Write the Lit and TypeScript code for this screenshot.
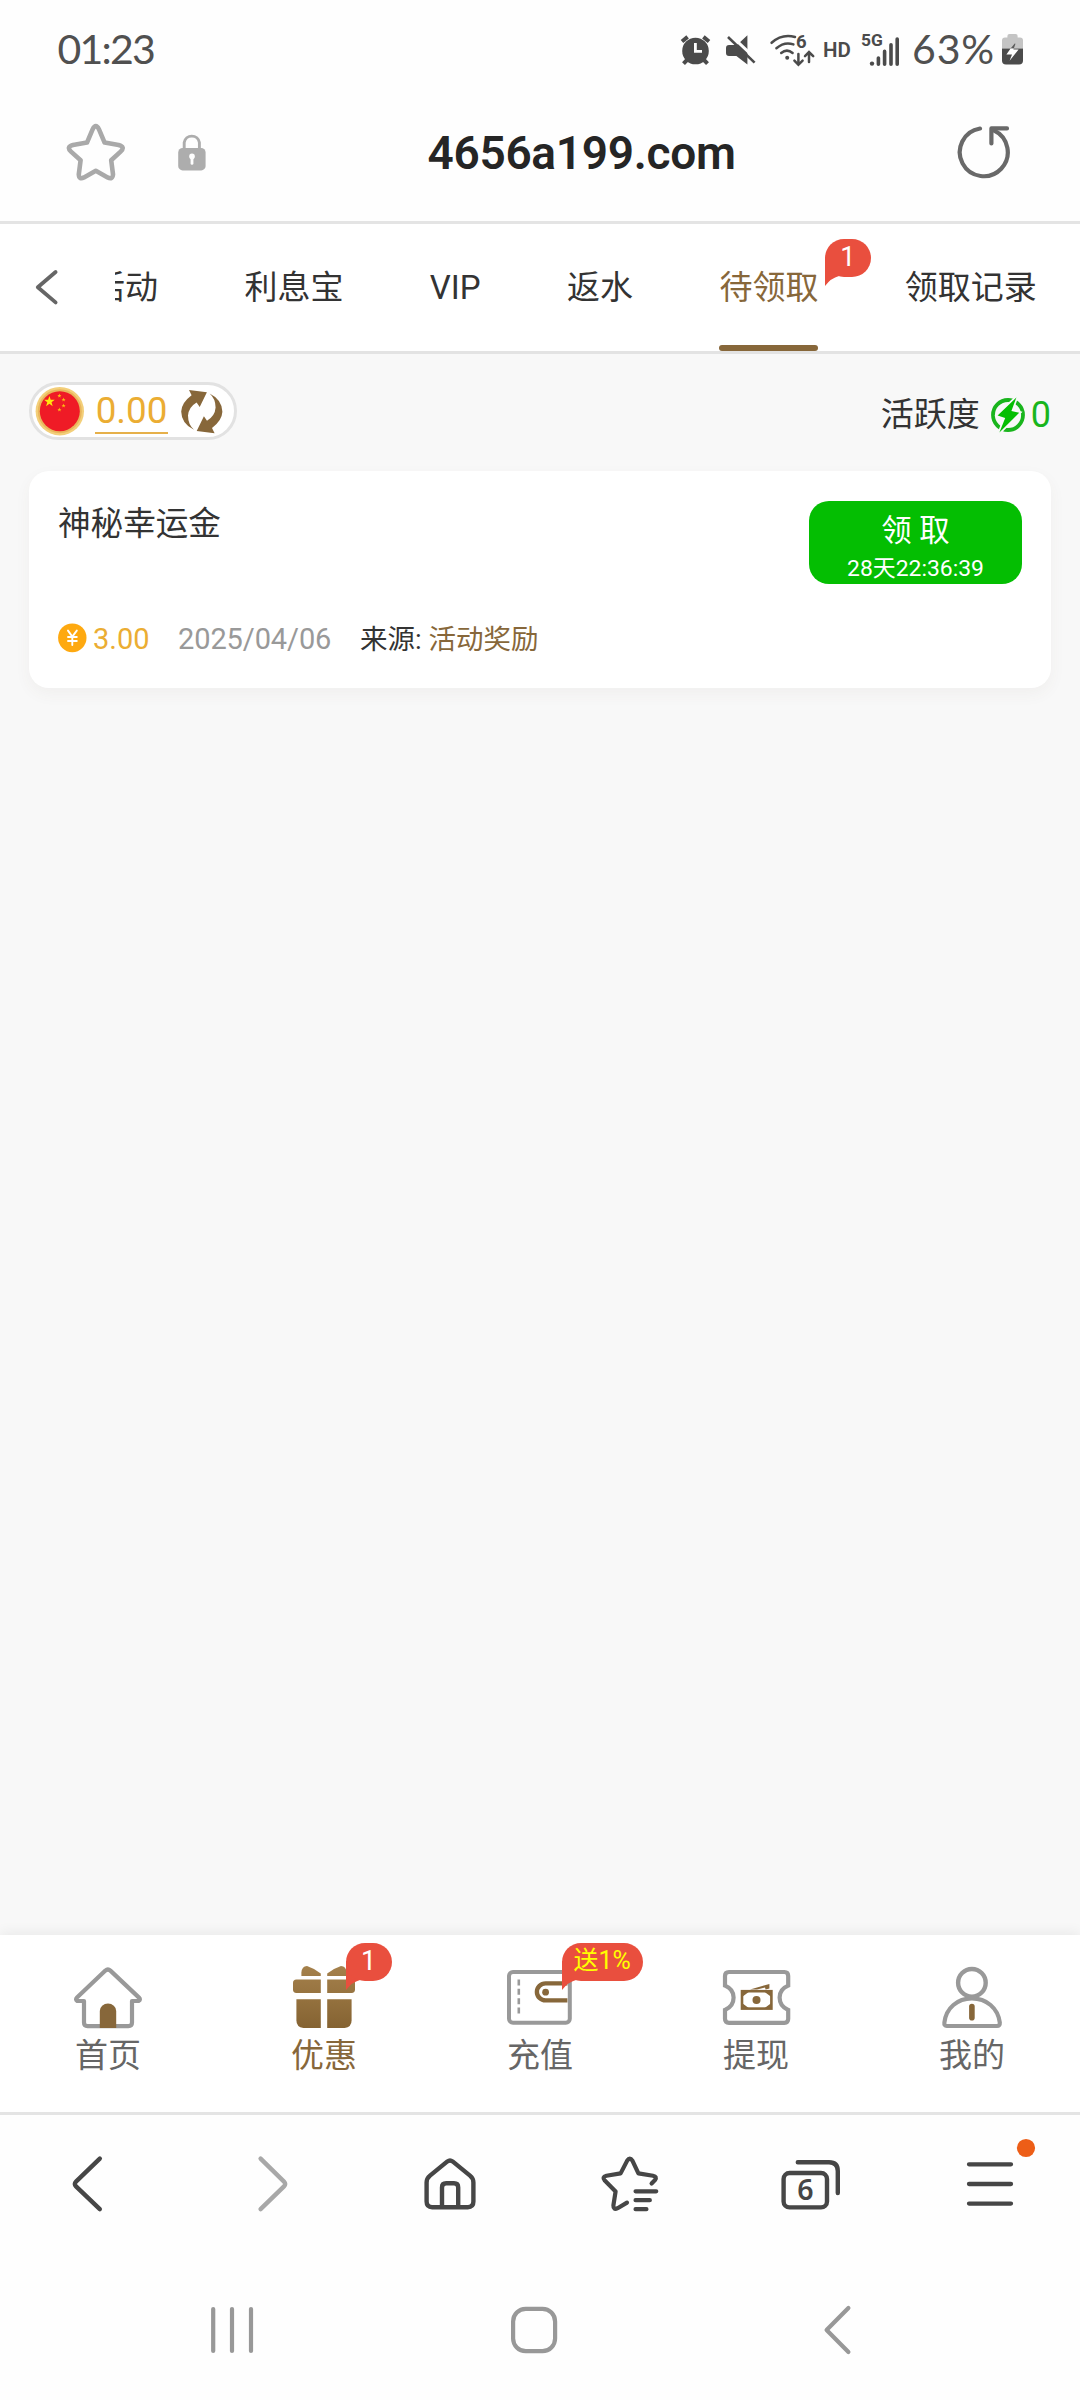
import { LitElement, html, css, svg } from "lit";
import { customElement, property } from "lit/decorators.js";
import { classMap } from "lit/directives/class-map.js";

interface NavItem {
  label: string;
  icon: unknown;
  active?: boolean;
  badge?: string;
  promo?: boolean;
}

/* Icons are drawn in screen units, each viewBox names the area that it covers. */
const icon = (x: number, y: number, w: number, h: number, body: unknown) => html`
  <svg width=${w} height=${h} viewBox="${x} ${y} ${w} ${h}" fill="none" style="display:block;flex:none">${body}</svg>
`;

const alarmIcon = icon(680, 34, 31, 32, svg`
  <g stroke="#4b4b4b" stroke-width="4" stroke-linecap="butt">
    <path d="M682 41.5L687.6 36.9M703.4 36.9L709 41.5"/>
    <path d="M687 60L683.5 63.6M704 60L707.5 63.6" />
  </g>
  <circle cx="695.5" cy="51" r="13.3" fill="#4b4b4b"/>
  <path d="M695.4 43V51.4H702" stroke="#fefefe" stroke-width="2.8"/>`);

const muteIcon = icon(725, 34, 32, 32, svg`
  <path d="M729 45H737L747.4 35.2V64.4L736.4 56H729Q726 56 726 53V48Q726 45 729 45Z" fill="#4b4b4b"/>
  <path d="M729 33.6L758 61" stroke="#fefefe" stroke-width="3"/>
  <path d="M728 37L754.6 62.6" stroke="#4b4b4b" stroke-width="2.6"/>`);

const wifiIcon = icon(769, 32, 46, 35, svg`
  <g stroke="#4b4b4b" stroke-width="2.5" stroke-linecap="round">
    <path d="M771.6 42.8Q782 33.4 795 37"/>
    <path d="M776.4 48.2Q784.6 41.2 793.4 44.4"/>
    <path d="M781.2 53Q787 48.2 792.6 53"/>
    <path d="M798.4 54V64.4M794.4 60.6L798.4 64.8L802.6 60.6"/>
    <path d="M809 62V52.4M805 56.2L809 52L813.2 56.2"/>
  </g>
  <circle cx="787.2" cy="57.8" r="2" fill="#4b4b4b"/>
  <text x="796" y="47.8" font-size="18.5" font-weight="700" font-family="Roboto, sans-serif" fill="#4b4b4b">6</text>`);

const signalIcon = icon(861, 26, 41, 47, svg`
  <text x="862" y="46.4" font-size="17.4" font-weight="700" font-family="Roboto, sans-serif" fill="#4b4b4b">5G</text>
  <circle cx="873" cy="63.6" r="2.2" fill="#4b4b4b"/>
  <path d="M879.4 58V64.2M885.6 51.4V64.2M892 44.8V64.2M898.2 39V64.2" stroke="#4b4b4b" stroke-width="3.6" stroke-linecap="round"/>`);

const batteryIcon = icon(1001, 33, 23, 33, svg`
  <path d="M1002 48.6V40.5Q1002 37.5 1005 37.5H1007.4V36Q1007.4 34 1009.4 34H1015.6Q1017.6 34 1017.6 36V37.5H1020Q1023 37.5 1023 40.5V48.6Z" fill="#c4c4c4"/>
  <path d="M1002 48.6H1023V60.5Q1023 64.6 1019 64.6H1006Q1002 64.6 1002 60.5Z" fill="#4b4b4b"/>
  <path d="M1015 43.2L1010.6 48.6H1013.8L1015.4 44Z" fill="#5a5a5a"/>
  <path d="M1010.6 48.6L1006.4 54.6H1012L1009.6 60.8L1018.6 49.6H1013.4L1013.8 48.6Z" fill="#fff"/>`);

const starIcon = icon(66, 122, 60, 60, svg`
  <path d="M92.6 129.4Q95.8 122.8 99 129.4L104.6 142.6L118.6 145Q125.6 147 120.6 151.6L111.2 160.2L113 174.4Q112.6 180 107.6 177.4L95.8 170.8L84 177.4Q79 180 78.8 174.4L80.6 160.2L71 151.6Q66 147 73 145L87 142.6Z" stroke="#a9a9a9" stroke-width="4.6" stroke-linejoin="round"/>`);

const lockIcon = icon(177, 132, 30, 40, svg`
  <path d="M184.2 150V142.6A7.7 7.7 0 0 1 199.4 142.6V150" stroke="#adadad" stroke-width="2.9"/>
  <rect x="178.2" y="148" width="27.4" height="22.4" rx="4.4" fill="#adadad"/>
  <circle cx="192" cy="156.4" r="2.8" fill="#fefefe"/>
  <path d="M192 157V163.4" stroke="#fefefe" stroke-width="2.8" stroke-linecap="round"/>`);

const reloadIcon = icon(956, 124, 56, 56, svg`
  <path d="M980 128.5A24 24 0 1 0 993.8 130.4" stroke="#696969" stroke-width="4.2" stroke-linecap="round"/>
  <path d="M1007 128.4H991.4V143.4" stroke="#696969" stroke-width="4.2" stroke-linecap="round" stroke-linejoin="round"/>`);

const chevronIcon = icon(34, 268, 26, 39, svg`
  <path d="M55.6 272L37.8 287.2L55.6 302.4" stroke="#666" stroke-width="3.8" stroke-linecap="round" stroke-linejoin="round"/>`);

const tinyStar = (x: number, y: number, r: number) => {
  const pts = Array.from({ length: 10 }, (_, i) => {
    const a = -Math.PI / 2 + (i * Math.PI) / 5;
    const d = i % 2 ? r * 0.4 : r;
    return `${(x + d * Math.cos(a)).toFixed(2)},${(y + d * Math.sin(a)).toFixed(2)}`;
  }).join(" ");
  return svg`<polygon points=${pts} fill="#ffe70d"/>`;
};

const flagIcon = icon(35, 386, 50, 50, svg`
  <circle cx="59.8" cy="411.2" r="24.2" fill="#f3cf7a"/>
  <circle cx="59.8" cy="411.2" r="22" fill="#e9b65c"/>
  <circle cx="59.8" cy="411.2" r="20" fill="#ef1b26"/>
  ${tinyStar(49.4, 401.6, 5.6)}
  <g opacity=".8">${tinyStar(59.4, 395.8, 2.2)}${tinyStar(63.6, 399.6, 2.2)}${tinyStar(63.6, 405.6, 2.2)}${tinyStar(59.4, 409.6, 2.2)}</g>`);

const swapHalf = "M189 390L206.9 392.2L199.7 407L196.6 402.4Q188.6 407 188 415.6Q188 424.6 194 429.8Q181.4 423.6 181.2 411.4Q181.6 402.6 191.6 395.2Z";
const swapIcon = icon(180, 388, 44, 47, svg`
  <path d=${swapHalf} fill="#87673a"/>
  <path d=${swapHalf} fill="#87673a" transform="rotate(180 201.8 411.6)"/>`);

const energyIcon = icon(990, 397, 37, 37, svg`
  <circle cx="1008" cy="415" r="15" stroke="#19b51d" stroke-width="3.8"/>
  <path d="M1016.4 397.4L997.6 415.4L1005.2 418L999.4 432.6L1019.2 412.8L1011.4 411Z" fill="#04be02" stroke="#f8f8f8" stroke-width="3.4"/>
  <path d="M1016.4 397.4L997.6 415.4L1005.2 418L999.4 432.6L1019.2 412.8L1011.4 411Z" fill="#04be02"/>`);

const coinIcon = icon(58, 623, 29, 30, svg`
  <ellipse cx="72.3" cy="637.8" rx="14.2" ry="14.4" fill="#fea910"/>
  <path d="M68 630.6L72.3 636.6L76.8 630.6M72.3 636.6V645M68 637H76.8M68 641H76.8" stroke="#fff" stroke-width="1.9" stroke-linecap="round"/>`);

const homeIcon = icon(73, 1965, 70, 64, svg`
  <path d="M84 2001H77.2Q75 1999.6 77 1997.6L105.4 1970.6Q107.9 1968.4 110.4 1970.6L139 1997.6Q141 1999.6 138.6 2001H132V2022.6Q132 2026.2 128.4 2026.2H87.6Q84 2026.2 84 2022.6Z" stroke="#999" stroke-width="4.2" stroke-linejoin="round"/>
  <path d="M99.8 2028V2011A8.2 7.4 0 0 1 116.2 2011V2028Z" fill="#87673a"/>`);

const giftIcon = icon(292, 1965, 64, 64, svg`
  <defs><linearGradient id="g" x1="0" y1="1966" x2="0" y2="2028" gradientUnits="userSpaceOnUse">
    <stop offset="0" stop-color="#a5814c"/><stop offset="1" stop-color="#856332"/></linearGradient></defs>
  <g fill="url(#g)">
    <path d="M301.4 1976V1972.6Q301.8 1966 307 1966Q315 1968.6 320.8 1973.6V1976Z"/>
    <path d="M346.6 1976V1972.6Q346.2 1966 341 1966Q333 1968.6 327.2 1973.6V1976Z"/>
    <path d="M320.8 1979.4V1993H296.4Q293 1993 293 1989.6V1983Q293 1979.4 296.4 1979.4Z"/>
    <path d="M327.2 1979.4V1993H351.6Q355 1993 355 1989.6V1983Q355 1979.4 351.6 1979.4Z"/>
    <path d="M320.8 1999.2V2028H303.4Q296.4 2027 296.4 2020.4V1999.2Z"/>
    <path d="M327.2 1999.2V2028H344.6Q351.6 2027 351.6 2020.4V1999.2Z"/>
  </g>`);

const walletIcon = icon(506, 1965, 68, 64, svg`
  <rect x="509" y="1972" width="60.8" height="50.8" rx="4" stroke="#999" stroke-width="4"/>
  <path d="M518.8 1979.4V2014.6" stroke="#999" stroke-width="2.6" stroke-dasharray="6 3.4"/>
  <path d="M567.4 1983.4H545.6A8.6 8.4 0 0 0 545.6 2000.4H567.4" stroke="#87673a" stroke-width="4.4"/>
  <circle cx="545.6" cy="1992.2" r="3.4" fill="#87673a"/>`);

const ticketIcon = icon(722, 1965, 69, 64, svg`
  <path d="M729 1972H784.4Q788.2 1972 788.2 1976V1985.6Q779.6 1989 779.6 1997.6Q779.6 2006.4 788.2 2010V2018.8Q788.2 2022.8 784.4 2022.8H729Q725 2022.8 725 2018.8V2010Q733.6 2006.4 733.6 1997.6Q733.6 1989 725 1985.6V1976Q725 1972 729 1972Z" stroke="#999" stroke-width="4.2"/>
  <rect x="742" y="1991.2" width="29.4" height="17.4" stroke="#87673a" stroke-width="2.6"/>
  <path d="M743 1995V1992.4H746.4ZM770.4 1995V1992.4H767ZM743 2005V2007.6H746.4ZM770.4 2005V2007.6H767Z" stroke="#87673a" stroke-width="2"/>
  <circle cx="756.5" cy="1999.9" r="4" fill="#87673a"/>
  <path d="M750 1989.4L769.4 1984V1988.6L765.6 1989.4L765 1987.4L757 1989.4Z" fill="#87673a"/>`);

const personIcon = icon(941, 1965, 63, 64, svg`
  <ellipse cx="971.9" cy="1982.8" rx="13.8" ry="13.8" stroke="#999" stroke-width="4.4"/>
  <path d="M946.8 2026Q944 2026 944.4 2022.6C946 2008 957.6 1998.4 971.9 1998.4C986.2 1998.4 998 2008 999.8 2022.6Q1000 2026 997 2026Z" stroke="#999" stroke-width="4.2"/>
  <path d="M971.9 2006.6V2017.8" stroke="#87673a" stroke-width="5.6" stroke-linecap="round"/>`);

const browserIcons = [
  icon(60, 2150, 60, 68, svg`<path d="M99.8 2158.6L76 2181.6Q73.6 2184 76 2186.4L99.8 2209.2" stroke="#464646" stroke-width="4.4" stroke-linecap="round"/>`),
  icon(240, 2150, 60, 68, svg`<path d="M260.6 2158.6L284 2181.6Q286.4 2184 284 2186.4L260.6 2209.2" stroke="#a8a8a8" stroke-width="4.4" stroke-linecap="round"/>`),
  icon(420, 2150, 60, 68, svg`
    <g stroke="#464646" stroke-width="4.4" stroke-linejoin="round">
      <path d="M447.4 2161.4Q450 2159.4 452.6 2161.4L470 2175.6Q473.4 2178.4 473.4 2182.4V2201.6Q473.4 2207.2 467.8 2207.2H432.2Q426.6 2207.2 426.6 2201.6V2182.4Q426.6 2178.4 430 2175.6Z"/>
      <path d="M442 2207V2187.4Q442 2183.2 446.2 2183.2H454Q458.2 2183.2 458.2 2187.4V2207"/>
    </g>`),
  icon(600, 2150, 60, 68, svg`
    <path d="M651.6 2183.4L655 2180Q657.4 2176.6 653 2175.8L638.4 2173.4L632.4 2160.6Q629.8 2156.4 627.2 2160.6L620.6 2173.4L606.4 2175.8Q601.6 2177 604.8 2180.6L615.6 2191.4L613.4 2205.4Q613.2 2210.4 617.6 2208.2L627 2202.6" stroke="#464646" stroke-width="4.2" stroke-linecap="round" stroke-linejoin="round"/>
    <path d="M635.6 2191.3H656.2M635.6 2200.2H649.8M635.6 2209.2H646.4" stroke="#464646" stroke-width="4.3" stroke-linecap="round"/>`),
  icon(779, 2150, 62, 68, svg`
    <rect x="783.6" y="2173" width="43.4" height="34.4" rx="6" stroke="#464646" stroke-width="4.4"/>
    <path d="M797.8 2162.2H829Q837.8 2162.2 837.8 2171V2193" stroke="#464646" stroke-width="4.4" stroke-linecap="round"/>
    <text x="805.5" y="2199.6" text-anchor="middle" font-size="28.5" font-weight="600" font-family="'Noto Sans', sans-serif" fill="#464646">6</text>`),
  icon(960, 2137, 78, 94, svg`
    <path d="M969 2164.3H1011M969 2184H1011M969 2203.6H1011" stroke="#464646" stroke-width="4.3" stroke-linecap="round"/>
    <circle cx="1026" cy="2148" r="9.1" fill="#ed5e17"/>`),
];

const recentsIcon = icon(210, 2304, 46, 52, svg`<path d="M213.2 2309V2351M232 2309V2351M251 2309V2351" stroke="#989898" stroke-width="4.2" stroke-linecap="round"/>`);
const sysHomeIcon = icon(509, 2304, 50, 52, svg`<rect x="513.1" y="2308.8" width="42" height="42.4" rx="12.6" stroke="#989898" stroke-width="4.2"/>`);
const sysBackIcon = icon(822, 2304, 31, 52, svg`<path d="M848.4 2308L826.6 2330L848.4 2352" stroke="#989898" stroke-width="4.2" stroke-linecap="round" stroke-linejoin="round"/>`);

@customElement("bubble-badge")
export class BubbleBadge extends LitElement {
  @property() text = "";
  @property({ type: Boolean }) promo = false;

  static styles = css`
    :host { display: block; position: relative; }
    .bubble {
      box-sizing: border-box; min-width: 46px; height: 38px; line-height: 36px; padding: 0 12px;
      border-radius: 19px; background: #e94f3e; color: #fff; font-size: 27px; text-align: center; white-space: nowrap;
      position: relative;
    }
    .tail { position: absolute; left: 0; top: 18px; display: block; }
    .promo { color: #ffff00; font-size: 24.9px; }
  `;

  render() {
    return html`
      <svg class="tail" width="20" height="29" viewBox="0 0 20 29"><path d="M0 0V29Q6 21 14 19L20 10Z" fill="#e94f3e"/></svg>
      <div class=${classMap({ bubble: true, promo: this.promo })}>${this.text}</div>
    `;
  }
}

@customElement("app-root")
export class AppRoot extends LitElement {
  private tabs: { label: string; active?: boolean; badge?: string }[] = [
    { label: "活动" },
    { label: "利息宝" },
    { label: "VIP" },
    { label: "返水" },
    { label: "待领取", active: true, badge: "1" },
    { label: "领取记录" },
  ];

  private nav: NavItem[] = [
    { label: "首页", icon: homeIcon },
    { label: "优惠", icon: giftIcon, active: true, badge: "1" },
    { label: "充值", icon: walletIcon, badge: "送1%", promo: true },
    { label: "提现", icon: ticketIcon },
    { label: "我的", icon: personIcon },
  ];

  static styles = css`
    :host {
      display: flex; flex-direction: column; width: 1080px; height: 2400px; overflow: hidden;
      font-family: Roboto, "Noto Sans CJK SC", sans-serif; font-weight: 400;
      font-size: 33px; color: #333; background: #f8f8f8; box-sizing: border-box;
    }
    * { box-sizing: border-box; }

    .status {
      height: 84px; padding: 15px 56px 0 57.5px; display: flex; align-items: center; background: #fefefe;
      color: #505050; font-size: 41px; flex: none;
    }
    .clock { letter-spacing: -1.8px; font-family: Lato, sans-serif; flex: 1; padding-bottom: 2px; }
    .status-icons { display: flex; align-items: center; }
    .alarm { margin-right: 14px; }
    .mute { margin-right: 12px; }
    .wifi { margin-right: 8px; }
    .hd { font-size: 20.5px; font-weight: 600; margin-right: 10px; width: 27px; color: #4b4b4b; }
    .signal { margin-right: 11px; }
    .percent { font-family: Lato, sans-serif; width: 89px; letter-spacing: 0.9px; padding-bottom: 2px; }

    .address {
      height: 140px; border-bottom: 3px solid #e4e4e4; background: #fefefe; padding: 0 68px 1px 66px;
      display: flex; align-items: center; flex: none;
    }
    .lock { margin-left: 51px; }
    .url {
      flex: 1; text-align: center; font-size: 46px; font-weight: 600; color: #252525; letter-spacing: -0.3px;
      padding-top: 1px;
    }

    .tabbar {
      height: 130px; border-bottom: 3px solid #e3e3e3; background: #fff; padding-left: 34px;
      display: flex; align-items: stretch; flex: none;
    }
    .tab-back { display: flex; align-items: center; width: 81px; }
    .tab-clip { flex: 1; overflow: hidden; }
    .tab-list { display: flex; gap: 86.4px; margin-left: -23px; height: 127px; }
    .tab {
      position: relative; display: flex; align-items: center; flex: none; white-space: nowrap; line-height: 40px;
      border-bottom: 6px solid transparent; padding-top: 6px;
    }
    .tab.active { color: #87673a; }
    .tab.active::after {
      content: ""; position: absolute; left: 0; right: 0; bottom: -6px; height: 6px; border-radius: 3px; background: #87673a;
    }
    .tab bubble-badge { position: absolute; left: 105.5px; top: 14.5px; }

    .content { flex: 1; padding: 28px 29px 0; }
    .wallet-row { display: flex; justify-content: space-between; align-items: center; height: 58px; }
    .pill {
      display: flex; align-items: center; width: 208px; height: 58px; border: 3px solid #e2e2e2; border-radius: 29px;
      background: #fff; padding-left: 3px;
    }
    .balance {
      margin: 0 12px 0 10px; width: 73px; text-align: center; font-size: 36.8px; color: #ebad33;
      line-height: 46px; height: 46px; border-bottom: 2.4px solid #e6b04a;
    }
    .energy { display: flex; align-items: center; padding-top: 8px; line-height: 50px; }
    .energy-value { color: #19b51d; font-size: 36px; margin-left: 4px; line-height: 46px; padding-bottom: 1px; }
    .energy-mark { margin: 0 0 0 10px; }

    .card {
      margin-top: 31px; height: 217px; border-radius: 20px; background: #fff; padding: 30px 29px 0 29px;
      box-shadow: 0 6px 16px rgba(90, 80, 50, 0.05);
      display: flex; flex-direction: column; justify-content: space-between;
    }
    .card-head { display: flex; justify-content: space-between; align-items: flex-start; }
    .title { line-height: 46px; font-size: 32.6px; }
    .claim {
      width: 213px; height: 83px; border-radius: 20px; background: #04be02; color: #fff; text-align: center;
      display: flex; flex-direction: column; align-items: center; padding-top: 10px;
    }
    .claim-label { font-size: 30.4px; line-height: 40px; height: 40px; }
    .claim-time { font-size: 22.9px; line-height: 35px; }
    .card-foot { display: flex; align-items: center; font-size: 29px; height: 36px; margin-bottom: 32px; white-space: nowrap; line-height: 36px; }
    .amount { color: #ebad33; margin-left: 6px; width: 57px; padding-top: 1px; }
    .date { color: #999; margin-left: 28px; width: 154px; padding-top: 1px; letter-spacing: -0.1px; }
    .source { font-size: 27.5px; margin-left: 28px; padding-top: 3px; }
    .source-link { color: #87673a; }

    .nav {
      height: 180px; background: #fff; border-bottom: 3px solid #e4e4e4; box-shadow: 0 -3px 12px rgba(0, 0, 0, 0.06);
      display: grid; grid-template-columns: repeat(5, 1fr); flex: none;
    }
    .nav-item {
      position: relative; display: flex; flex-direction: column; align-items: center; padding-top: 30px; color: #666;
    }
    .nav-item.active { color: #87673a; }
    .nav-label { line-height: 46px; margin-top: 3.5px; }
    .nav-item bubble-badge { position: absolute; left: 129.5px; top: 8px; }

    .browser {
      height: 138px; background: #fefefe; display: grid; grid-template-columns: repeat(6, 180px); align-items: center;
      justify-items: center; flex: none;
    }
    .browser-item.menu { padding-left: 18px; }
    .system {
      height: 147px; background: #fefefe; display: flex; align-items: flex-start;
      padding: 51px 0 0 210px; flex: none;
    }
    .sys-home { margin-left: 253px; }
    .sys-back { margin-left: 263px; }
  `;

  render() {
    return html`
      <div class="status">
        <span class="clock">01:23</span>
        <div class="status-icons">
          <span class="alarm">${alarmIcon}</span>
          <span class="mute">${muteIcon}</span>
          <span class="wifi">${wifiIcon}</span>
          <span class="hd">HD</span>
          <span class="signal">${signalIcon}</span>
          <span class="percent">63%</span>
          <span class="battery">${batteryIcon}</span>
        </div>
      </div>

      <div class="address">
        ${starIcon}
        <span class="lock">${lockIcon}</span>
        <span class="url">4656a199.com</span>
        ${reloadIcon}
      </div>

      <div class="tabbar">
        <div class="tab-back">${chevronIcon}</div>
        <div class="tab-clip">
          <div class="tab-list">
            ${this.tabs.map((t) => html`
              <div class=${classMap({ tab: true, active: !!t.active })}>
                ${t.label}
                ${t.badge ? html`<bubble-badge .text=${t.badge}></bubble-badge>` : null}
              </div>`)}
          </div>
        </div>
      </div>

      <div class="content">
        <div class="wallet-row">
          <div class="pill">
            ${flagIcon}
            <span class="balance">0.00</span>
            ${swapIcon}
          </div>
          <div class="energy">
            <span>活跃度</span>
            <span class="energy-mark">${energyIcon}</span>
            <span class="energy-value">0</span>
          </div>
        </div>

        <div class="card">
          <div class="card-head">
            <span class="title">神秘幸运金</span>
            <div class="claim">
              <span class="claim-label">领 取</span>
              <span class="claim-time">28天22:36:39</span>
            </div>
          </div>
          <div class="card-foot">
            ${coinIcon}
            <span class="amount">3.00</span>
            <span class="date">2025/04/06</span>
            <span class="source">来源: <span class="source-link">活动奖励</span></span>
          </div>
        </div>
      </div>

      <div class="nav">
        ${this.nav.map((n) => html`
          <div class=${classMap({ "nav-item": true, active: !!n.active })}>
            ${n.icon}
            <span class="nav-label">${n.label}</span>
            ${n.badge ? html`<bubble-badge .text=${n.badge} ?promo=${!!n.promo}></bubble-badge>` : null}
          </div>`)}
      </div>

      <div class="browser">
        ${browserIcons.map((b, i) => html`<div class=${classMap({ "browser-item": true, menu: i === 5 })}>${b}</div>`)}
      </div>

      <div class="system">
        <span>${recentsIcon}</span>
        <span class="sys-home">${sysHomeIcon}</span>
        <span class="sys-back">${sysBackIcon}</span>
      </div>
    `;
  }
}
